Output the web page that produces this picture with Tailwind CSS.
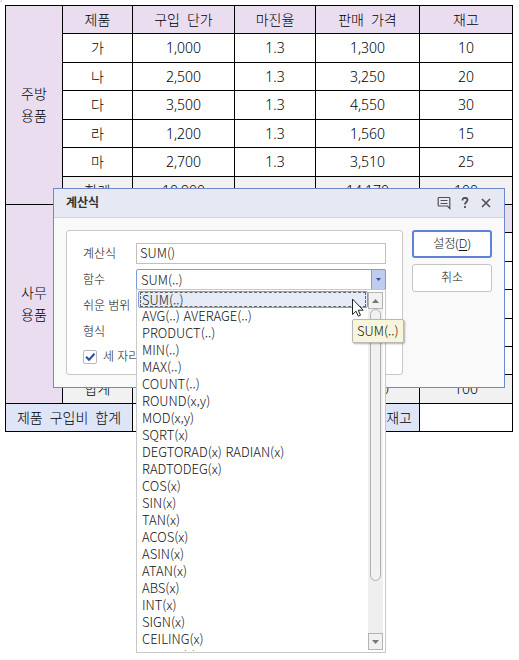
<!DOCTYPE html>
<html lang="ko">
<head>
<meta charset="utf-8">
<meta name="viewport" content="width=device-width, initial-scale=1">
<title>계산식</title>
<script src="https://cdn.jsdelivr.net/npm/@tailwindcss/browser@4"></script>
</head>
<body class="bg-white font-['Noto_Sans','Noto_Sans_CJK_KR',sans-serif] font-light text-black">
<main class="relative min-h-screen overflow-hidden pt-[5px] pr-[6px] pl-[5px]">
  <span class="absolute top-0 left-0 size-[2px] border-r border-b border-gray-300"></span>

  <table class="w-full table-fixed border-collapse text-center text-[14px] leading-[22px] [&_td]:border [&_td]:border-black [&_td]:p-0 [&_th]:border [&_th]:border-black [&_th]:p-0 [&_th]:font-light">
    <colgroup>
      <col class="w-[57px]"><col class="w-[70px]"><col class="w-[102px]"><col class="w-[81px]"><col class="w-[104px]"><col class="w-[93px]">
    </colgroup>
    <tbody>
      <tr class="h-[28px] bg-[#eaddf0]"><th rowspan="7" scope="rowgroup">주방<br>용품</th><th scope="col">제품</th><th scope="col">구입&ensp;단가</th><th scope="col">마진율</th><th scope="col">판매&ensp;가격</th><th scope="col">재고</th></tr>
      <tr class="h-[29px]"><td>가</td><td>1,000</td><td>1.3</td><td>1,300</td><td>10</td></tr>
      <tr class="h-[28px]"><td>나</td><td>2,500</td><td>1.3</td><td>3,250</td><td>20</td></tr>
      <tr class="h-[29px]"><td>다</td><td>3,500</td><td>1.3</td><td>4,550</td><td>30</td></tr>
      <tr class="h-[28px]"><td>라</td><td>1,200</td><td>1.3</td><td>1,560</td><td>15</td></tr>
      <tr class="h-[29px]"><td>마</td><td>2,700</td><td>1.3</td><td>3,510</td><td>25</td></tr>
      <tr class="h-[28px] bg-[#f1f1f1]"><td>합계</td><td>10,900</td><td></td><td>14,170</td><td>100</td></tr>
    </tbody>
    <tbody>
      <tr class="h-[28px] bg-[#eaddf0]"><th rowspan="7" scope="rowgroup">사무<br>용품</th><th></th><th></th><th></th><th></th><th></th></tr>
      <tr class="h-[29px]"><td></td><td></td><td></td><td></td><td></td></tr>
      <tr class="h-[28px]"><td></td><td></td><td></td><td></td><td></td></tr>
      <tr class="h-[29px]"><td></td><td></td><td></td><td></td><td></td></tr>
      <tr class="h-[28px]"><td></td><td></td><td></td><td></td><td></td></tr>
      <tr class="h-[28px]"><td></td><td></td><td></td><td></td><td></td></tr>
      <tr class="h-[29px] bg-[#f1f1f1]"><td>합계</td><td></td><td></td><td>14,170</td><td>100</td></tr>
    </tbody>
    <tbody>
      <tr class="h-[28px]"><th colspan="2" scope="row" class="bg-[#dde5f7]">제품&ensp;구입비&ensp;합계</th><td></td><th colspan="2" scope="row" class="bg-[#dde5f7] text-right"><span class="pr-[7px]">재고</span></th><td></td></tr>
    </tbody>
  </table>

  <section role="dialog" aria-labelledby="dlg-title" class="absolute top-[188px] left-[53px] w-[452px] border border-[#6c8acb] bg-[#f9f9f9] text-[12px] text-[#111111]">
    <header class="flex h-[29px] items-center border-b border-[#cdd2e8] bg-[#e6e8f4] pr-[11px] pl-3">
      <h2 id="dlg-title" class="flex-1 text-[12px] font-bold text-[#333333]">계산식</h2>
      <div class="flex items-center gap-[7px] text-[#505050]">
        <button type="button" aria-label="의견" class="size-[14px]"><svg viewBox="0 0 14 14" class="size-[14px]" fill="none" stroke="currentColor" stroke-width="1.2"><path d="M2 1.500h10a.8.8 0 0 1 .8.8v10.200l-2.300-2.500H2a.8.8 0 0 1-.8-.8V2.300a.8.8 0 0 1 .8-.8zM3.500 4.500h7M3.500 7.500h7"/></svg></button>
        <button type="button" aria-label="도움말" class="size-[14px]"><svg viewBox="0 0 14 14" class="size-[14px]" fill="none" stroke="currentColor" stroke-width="1.8"><path d="M4.500 4.500V4a2 2 0 0 1 2-2h1a2 2 0 0 1 2 2c0 2-2.500 2-2.500 4.500M7 10v2"/></svg></button>
        <button type="button" aria-label="닫기" class="size-[14px]"><svg viewBox="0 0 14 14" class="size-[14px]" fill="none" stroke="currentColor" stroke-width="1.6"><path d="M3 3l8 8M11 3l-8 8"/></svg></button>
      </div>
    </header>
    <form class="flex items-start gap-[9px] px-3 pt-3 pb-3">
      <div class="grid flex-1 grid-cols-[53px_1fr] items-center gap-y-[5px] rounded-[3px] border border-[#c8c8c8] bg-white pt-3 pr-4 pb-[8px] pl-4">
        <label for="formula">계산식</label>
        <input id="formula" type="text" value="SUM()" class="h-[21px] w-full border border-[#c0c0c0] bg-white px-[3px] pb-[2px] font-['Noto_Sans_CJK_KR','Noto_Sans',sans-serif] text-[13px] outline-none">
        <label for="func">함수</label>
        <div class="relative font-['Noto_Sans_CJK_KR','Noto_Sans',sans-serif] text-[13px]">
          <select id="func" class="block h-[21px] w-full appearance-none rounded-[2px] border border-[#7f9bdb] bg-white px-[4px] pb-[2px] outline-none"><option>SUM(..)</option></select>
          <span class="pointer-events-none absolute inset-y-0 right-0 flex w-[15px] items-center justify-center rounded-r-[2px] border border-[#7f9bdb] bg-[#bfccee]"><svg viewBox="0 0 5 3" class="h-[3px] w-[5px]" fill="#2f4f9f"><path d="M0 0h5L2.500 3z"/></svg></span>

          <div class="absolute top-[20px] right-0 left-0 z-10 flex h-[364px] border border-[#c8c8c8] bg-white pr-[2px] pb-px pl-px">
            <ul role="listbox" aria-label="함수" class="flex-1 overflow-hidden leading-[17px] [&>li]:px-[4px]">
              <li role="option" aria-selected="true" class="mt-px -mb-px h-[17px] rounded-[2px] border border-[#7f9bdb] bg-[#e6ebf8] !px-px text-[#222222]"><div class="h-[15px] border border-dashed border-[#666666] pl-px leading-[13px]">SUM(..)</div></li>
              <li role="option">AVG(..) AVERAGE(..)</li>
              <li role="option">PRODUCT(..)</li>
              <li role="option">MIN(..)</li>
              <li role="option">MAX(..)</li>
              <li role="option">COUNT(..)</li>
              <li role="option">ROUND(x,y)</li>
              <li role="option">MOD(x,y)</li>
              <li role="option">SQRT(x)</li>
              <li role="option">DEGTORAD(x) RADIAN(x)</li>
              <li role="option">RADTODEG(x)</li>
              <li role="option">COS(x)</li>
              <li role="option">SIN(x)</li>
              <li role="option">TAN(x)</li>
              <li role="option">ACOS(x)</li>
              <li role="option">ASIN(x)</li>
              <li role="option">ATAN(x)</li>
              <li role="option">ABS(x)</li>
              <li role="option">INT(x)</li>
              <li role="option">SIGN(x)</li>
              <li role="option">CEILING(x)</li>
              <li role="option">FLOOR(x)</li>
            </ul>
            <div class="mt-[2px] mb-px flex w-[15px] flex-col bg-[#efefef]">
              <button type="button" aria-label="위로" class="flex h-[17px] items-center justify-center border border-[#b4b4b4] bg-[#f1f1f1]"><svg viewBox="0 0 7 4" class="h-[4px] w-[7px]" fill="#777777"><path d="M0 4h7L3.500 0z"/></svg></button>
              <div class="flex-1 px-[2px]"><div class="h-[272px] rounded-full border border-[#b0b0b0] bg-[#f1f1f1]"></div></div>
              <button type="button" aria-label="아래로" class="flex h-[17px] items-center justify-center border border-[#b4b4b4] bg-[#f1f1f1]"><svg viewBox="0 0 7 4" class="h-[4px] w-[7px]" fill="#777777"><path d="M0 0h7L3.500 4z"/></svg></button>
            </div>
          </div>

          <div role="tooltip" class="absolute top-[50px] left-[216px] z-20 h-[24px] rounded-[2px] border border-[#b8b8b8] bg-[#f7f6dc] px-[4px] leading-[21px] whitespace-nowrap shadow-[1px_1px_2px_rgba(0,0,0,0.3)]">SUM(..)</div>
          <svg viewBox="0 0 12 19" class="absolute top-[29px] left-[216px] z-30 h-[19px] w-[12px]" fill="white" stroke="#222222"><path d="M.5 1v15.500l3.500-3.300 2.300 5 2.200-1-2.300-5h5z"/></svg>
        </div>
        <label for="range">쉬운 범위</label>
        <select id="range" class="h-[21px] w-full appearance-none border border-[#c0c0c0] bg-white px-[4px]"><option></option></select>
        <label for="format">형식</label>
        <select id="format" class="h-[21px] w-full appearance-none border border-[#c0c0c0] bg-white px-[4px]"><option></option></select>
        <label class="col-span-2 flex h-[19px] items-center gap-[6px]">
          <span class="relative size-[14px]">
            <input type="checkbox" checked class="peer block size-[14px] appearance-none rounded-[2px] border border-[#b8b8b8] bg-white">
            <svg viewBox="0 0 14 14" class="pointer-events-none absolute inset-0 hidden size-[14px] peer-checked:block" fill="none" stroke="#2b4fa3" stroke-width="2"><path d="M3 6.800l3 3 5.500-6"/></svg>
          </span>
          <span>세 자리</span>
        </label>
      </div>
      <div class="flex w-[80px] flex-col gap-[6px]">
        <button type="submit" class="h-[28px] rounded-[3px] border-2 border-[#5f82d8] bg-white">설정(<u class="underline-offset-2">D</u>)</button>
        <button type="button" class="h-[28px] rounded-[3px] border border-[#c4c4c4] bg-white">취소</button>
      </div>
    </form>
  </section>
</main>
</body>
</html>
